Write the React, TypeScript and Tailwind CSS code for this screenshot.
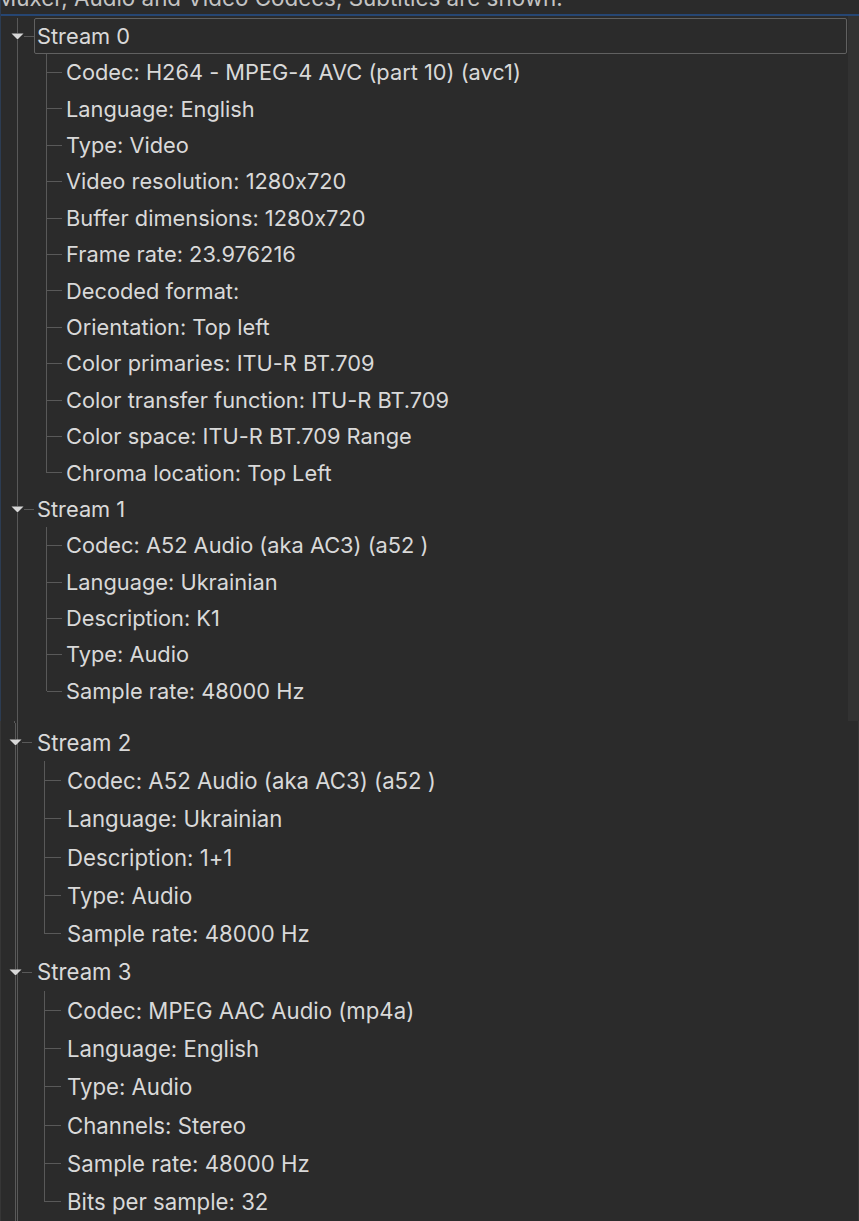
import React from "react";

type Node = { label: string; children: string[] };

const topStreams: Node[] = [
  {
    label: "Stream 0",
    children: [
      "Codec: H264 - MPEG-4 AVC (part 10) (avc1)",
      "Language: English",
      "Type: Video",
      "Video resolution: 1280x720",
      "Buffer dimensions: 1280x720",
      "Frame rate: 23.976216",
      "Decoded format:",
      "Orientation: Top left",
      "Color primaries: ITU-R BT.709",
      "Color transfer function: ITU-R BT.709",
      "Color space: ITU-R BT.709 Range",
      "Chroma location: Top Left",
    ],
  },
  {
    label: "Stream 1",
    children: [
      "Codec: A52 Audio (aka AC3) (a52 )",
      "Language: Ukrainian",
      "Description: K1",
      "Type: Audio",
      "Sample rate: 48000 Hz",
    ],
  },
];

const bottomStreams: Node[] = [
  {
    label: "Stream 2",
    children: [
      "Codec: A52 Audio (aka AC3) (a52 )",
      "Language: Ukrainian",
      "Description: 1+1",
      "Type: Audio",
      "Sample rate: 48000 Hz",
    ],
  },
  {
    label: "Stream 3",
    children: [
      "Codec: MPEG AAC Audio (mp4a)",
      "Language: English",
      "Type: Audio",
      "Channels: Stereo",
      "Sample rate: 48000 Hz",
      "Bits per sample: 32",
    ],
  },
];

// two captures stitched together, slightly different scale
const styles = {
  top: {
    row: "h-[36.4px] text-[21.8px]",
    spacer: "w-[10px]",
    rootLine: "w-[17px]",
    childLine: "w-[14px]",
    connector: "w-[15px]",
    text: "pl-[4px]",
    streamText: "pl-[2px]",
  },
  bottom: {
    row: "h-[38.3px] text-[22.2px]",
    spacer: "w-[8px]",
    rootLine: "w-[15px]",
    childLine: "w-[14px]",
    connector: "w-[16px]",
    text: "pl-[6px]",
    streamText: "pl-[4px]",
  },
};

function Arrow() {
  return (
    <svg width="13" height="7" viewBox="0 0 13 7" className="shrink-0">
      <polygon points="0.5,0.5 12.5,0.5 6.5,6.5" fill="#d8d8d8" />
    </svg>
  );
}

function StreamRow({ label, selected, v }: { label: string; selected?: boolean; v: "top" | "bottom" }) {
  const s = styles[v];
  return (
    <div className={`flex items-stretch ${s.row}`}>
      <div className={`${s.spacer} shrink-0`} />
      <div className="flex w-[13px] shrink-0 flex-col items-center">
        <div className="w-px flex-1 bg-[#595959]" />
        <Arrow />
        <div className="w-px flex-1 bg-[#595959]" />
      </div>
      <div className="flex w-[10px] shrink-0 items-center">
        <div className="h-px w-full bg-[#595959]" />
      </div>
      <div
        className={`flex flex-1 items-center ${s.streamText} ${
          selected ? "mr-[1px] rounded-[2px] border border-[#616161]" : "border border-transparent"
        }`}
      >
        {label}
      </div>
    </div>
  );
}

function ChildRow({ text, last, v }: { text: string; last: boolean; v: "top" | "bottom" }) {
  const s = styles[v];
  return (
    <div className={`flex items-stretch ${s.row}`}>
      <div className={`${s.rootLine} shrink-0 border-r border-[#595959]`} />
      <div className="w-[15px] shrink-0" />
      <div className={`${s.childLine} flex shrink-0 flex-col`}>
        <div className="flex-1 border-r border-[#595959]" />
        <div className={`flex-1 border-r ${last ? "border-transparent" : "border-[#595959]"}`} />
      </div>
      <div className={`${s.connector} flex shrink-0 items-center`}>
        <div className="h-px w-full bg-[#595959]" />
      </div>
      <div className={`flex items-center whitespace-nowrap ${s.text}`}>{text}</div>
    </div>
  );
}

function Tree({ nodes, v, selectFirst }: { nodes: Node[]; v: "top" | "bottom"; selectFirst?: boolean }) {
  return (
    <div className="flex flex-col">
      {nodes.map((n, i) => (
        <React.Fragment key={n.label}>
          <StreamRow label={n.label} selected={selectFirst && i === 0} v={v} />
          {n.children.map((c, j) => (
            <ChildRow key={c} text={c} last={j === n.children.length - 1} v={v} />
          ))}
        </React.Fragment>
      ))}
    </div>
  );
}

export default function App() {
  return (
    <div
      className="h-[1221px] w-[859px] overflow-hidden bg-[#2b2b2b] text-[#d9d9d9] [font-feature-settings:'calt'_0]"
      style={{ fontFamily: "Inter, 'Noto Sans', sans-serif" }}
    >
      {/* top capture */}
      <div className="flex h-[721px] flex-col border-l border-[#2c3c52]">
        <div className="h-[14px] overflow-hidden whitespace-nowrap text-[22.4px] leading-[24px] text-[#c4c4c4]">
          <div className="-mt-[14px] -ml-[5px]">Muxer, Audio and Video Codecs, Subtitles are shown.</div>
        </div>
        <div className="h-[2px] bg-[#264673]" />
        <div className="flex flex-1">
          <div className="flex-1 pt-[2px]">
            <Tree nodes={topStreams} v="top" selectFirst />
            <div className="flex h-full">
              <div className="w-[17px] shrink-0 border-r border-[#595959]" />
            </div>
          </div>
          <div className="w-[11px] bg-[#323232]" />
        </div>
      </div>
      {/* bottom capture */}
      <div className="flex h-[500px] flex-col border-x border-[#363636]">
        <div className="flex h-[4.85px]">
          <div className="w-[14px] shrink-0 border-r border-[#595959]" />
        </div>
        <Tree nodes={bottomStreams} v="bottom" />
      </div>
    </div>
  );
}
